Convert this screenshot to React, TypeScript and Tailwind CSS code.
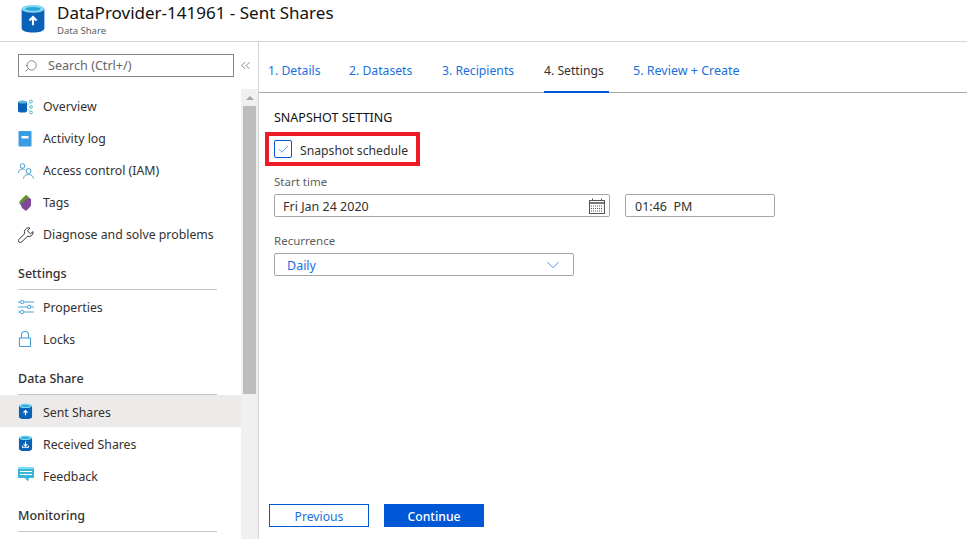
import React from "react";
import { Search, ChevronDown, Check, ChevronsLeft } from "lucide-react";

const font = "font-['Noto_Sans','Open_Sans',sans-serif]";

const Barrel = ({ size = 16, down = false }: { size?: number; down?: boolean }) => (
  <svg width={size} height={(size * 18) / 16} viewBox="0 0 16 18" fill="none">
    <path d="M1 3v12c0 1.4 3.1 2.5 7 2.5s7-1.1 7-2.5V3z" fill="#0a62b8" />
    <ellipse cx="8" cy="3" rx="7" ry="2.4" fill="#7fd8f0" />
    <ellipse cx="8" cy="3" rx="4.6" ry="1.2" fill="#2aa8dc" />
    {down ? (
      <path d="M8 7v4.5M6 9.8l2 2 2-2M4.8 11.5v1.5h6.4v-1.5" stroke="#fff" strokeWidth="1.1" />
    ) : (
      <path d="M8 13V8M5.8 10.2 8 8l2.2 2.2" stroke="#fff" strokeWidth="1.3" />
    )}
  </svg>
);

const OverviewIcon = () => (
  <svg width="16" height="16" viewBox="0 0 16 16" fill="none">
    <path d="M0 3v9c0 1 1.8 1.6 4.5 1.6S9 13 9 12V3z" fill="#0a62b8" />
    <ellipse cx="4.5" cy="3" rx="4.5" ry="1.6" fill="#59b4d9" />
    <circle cx="13" cy="2.5" r="1.4" stroke="#59b4d9" />
    <circle cx="13" cy="8" r="1.4" stroke="#59b4d9" />
    <circle cx="13" cy="13.5" r="1.4" stroke="#59b4d9" />
    <path d="M9.5 6 12 3.5M9.5 10l2.5 2.5" stroke="#59b4d9" strokeWidth="0.8" />
  </svg>
);

const LogIcon = () => (
  <svg width="14" height="16" viewBox="0 0 14 16">
    <rect width="13" height="15.5" x="0.5" rx="1.2" fill="#3b9ce4" />
    <rect width="7" height="2.5" x="3.5" y="5" fill="#fff" />
  </svg>
);

const PeopleIcon = () => (
  <svg width="16" height="16" viewBox="0 0 16 16" fill="none" stroke="#4aa3d8">
    <circle cx="4.5" cy="3" r="2.3" />
    <path d="M.5 10c0-2.4 1.6-4 4-4 .8 0 1.5.2 2 .5" />
    <circle cx="10.5" cy="8" r="2.5" />
    <path d="M5.5 15.5c.2-2.6 2.2-4 5-4s4.8 1.4 5 4" />
  </svg>
);

const TagIcon = () => (
  <svg width="14" height="16" viewBox="0 0 14 16">
    <path d="M8 0 1 7l1 3 8-7z" fill="#76bc2d" />
    <path d="M9 1.5 2 8l2 5 4 3 5-5V4z" fill="#804998" />
    <path d="M8 0 2 6l2 2 7-6z" fill="#5e9624" />
  </svg>
);

const WrenchIcon = () => (
  <svg width="16" height="16" viewBox="0 0 16 16" fill="none" stroke="#333" strokeWidth="1">
    <path d="M10.5.8a4.2 4.2 0 0 0-3.8 5.8L1 12.3a1.9 1.9 0 0 0 2.7 2.7l5.7-5.7A4.2 4.2 0 0 0 15 4.6l-2.6 2.2-3-3L12 1.1a4 4 0 0 0-1.5-.3z" />
  </svg>
);

const SlidersIcon = () => (
  <svg width="16" height="14" viewBox="0 0 16 14" fill="none" stroke="#4aa3d8">
    <path d="M0 2h2.5M6 2h10M0 7h9.5M13 7h3M0 12h2.5M6 12h10" />
    <circle cx="4.2" cy="2" r="1.7" />
    <circle cx="11.2" cy="7" r="1.7" />
    <circle cx="4.2" cy="12" r="1.7" />
  </svg>
);

const LockIcon = () => (
  <svg width="14" height="16" viewBox="0 0 14 16" fill="none" stroke="#4aa3d8" strokeWidth="1.1">
    <rect x="1.5" y="7" width="11" height="8.5" />
    <path d="M3.5 7V4a3.5 3.5 0 0 1 7 0v3" />
  </svg>
);

const FeedbackIcon = () => (
  <svg width="16" height="16" viewBox="0 0 16 16">
    <path d="M0 0h16v11h-5l-1 3.5L7 11H0z" fill="#3bb6d9" />
    <path d="M0 0h16v2H0z" fill="#7fdcf0" />
    <path d="M2 4.5h12M2 7.5h12" stroke="#fff" />
  </svg>
);

const CalendarIcon = () => (
  <svg width="16" height="16" viewBox="0 0 16 16" fill="none" stroke="#555">
    <rect x="0.5" y="2.5" width="15" height="13" />
    <path d="M0.5 5h15" strokeWidth="1.6" />
    <path d="M3.5 0.5v2M12.5 0.5v2" />
    <path d="M2 8h12M2 10.5h12M2 13h12" strokeDasharray="1 1" />
  </svg>
);

function NavRow({
  icon,
  label,
  active,
  textPad = "pt-[2px]",
}: {
  icon: React.ReactNode;
  label: string;
  active?: boolean;
  textPad?: string;
}) {
  return (
    <div className={`flex h-8 items-center pl-[18px] ${active ? "bg-[#edebe9]" : ""}`}>
      <span className="flex w-[25px] shrink-0 items-center">{icon}</span>
      <span className={`text-[12.3px] text-[#323130] ${textPad}`}>{label}</span>
    </div>
  );
}

function NavHeading({ label, className }: { label: string; className: string }) {
  return (
    <div
      className={`ml-[18px] mr-[24px] flex h-[32px] items-end border-b border-[#c8c6c4] pb-[7px] text-[12.5px] font-medium leading-4 text-[#323130] ${className}`}
    >
      {label}
    </div>
  );
}

const tabs = [
  { label: "1. Details", width: "w-[81px] text-[12.2px]" },
  { label: "2. Datasets", width: "w-[93px] text-[12.2px]" },
  { label: "3. Recipients", width: "w-[102px] text-[12.2px]" },
  { label: "4. Settings", width: "w-[65px] mr-[24px] text-[12.2px]" },
  { label: "5. Review + Create", width: "text-[12.5px]" },
];

export default function App() {
  return (
    <div className={`flex h-[539px] w-[967px] flex-col overflow-hidden bg-white ${font}`}>
      <header className="flex h-[42px] shrink-0 items-start border-b border-[#d4d4d4] pl-[20px]">
        <span className="mt-[4px]">
          <Barrel size={26} />
        </span>
        <div className="ml-[11px] mt-[1px]">
          <div className="text-[17px] leading-[24px] text-[#111]">DataProvider-141961 - Sent Shares</div>
          <div className="text-[9.5px] leading-[12px] text-[#605e5c]">Data Share</div>
        </div>
      </header>

      <div className="flex min-h-0 flex-1">
        <aside className="flex w-[259px] shrink-0 flex-col border-r border-[#d4d4d4]">
          <div className="flex h-[47px] shrink-0 items-start pl-[18px] pt-[12px]">
            <div className="flex h-[23px] w-[216px] items-center border border-[#8a8886] pl-[5px]">
              <Search size={14} strokeWidth={1.2} className="-scale-x-100 text-[#605e5c]" />
              <span className="ml-[10px] pt-[2px] text-[12.6px] text-[#666]">Search (Ctrl+/)</span>
            </div>
            <ChevronsLeft size={15} strokeWidth={1} className="ml-[4px] mt-[4px] text-[#444]" />
          </div>
          <div className="flex min-h-0 flex-1">
            <nav className="w-[241px] shrink-0 pt-[2px]">
              <NavRow textPad="pt-0" icon={<OverviewIcon />} label="Overview" />
              <NavRow textPad="pt-0" icon={<LogIcon />} label="Activity log" />
              <NavRow textPad="pt-0" icon={<PeopleIcon />} label="Access control (IAM)" />
              <NavRow textPad="pt-0" icon={<TagIcon />} label="Tags" />
              <NavRow textPad="pt-0" icon={<WrenchIcon />} label="Diagnose and solve problems" />
              <NavHeading label="Settings" className="mb-[1px] mt-[7px]" />
              <NavRow icon={<SlidersIcon />} label="Properties" />
              <NavRow icon={<LockIcon />} label="Locks" />
              <NavHeading label="Data Share" className="mt-[8px]" />
              <NavRow textPad="pt-[4px]" active icon={<Barrel size={15} />} label="Sent Shares" />
              <NavRow textPad="pt-[4px]" icon={<Barrel size={15} down />} label="Received Shares" />
              <NavRow textPad="pt-[4px]" icon={<FeedbackIcon />} label="Feedback" />
              <NavHeading label="Monitoring" className="mt-[9px]" />
            </nav>
            <div className="flex w-[17px] shrink-0 flex-col items-center bg-[#f0f0f0]">
              <div className="flex h-[17px] w-full items-center justify-center">
                <div className="h-0 w-0 border-x-[4px] border-b-[4px] border-x-transparent border-b-[#a6a6a6]" />
              </div>
              <div className="h-[288px] w-[13px] bg-[#bdbdbd]" />
            </div>
          </div>
        </aside>

        <main className="flex min-w-0 flex-1 flex-col">
          <div className="flex h-[51px] shrink-0 items-end border-b border-[#a6a6a6] pl-[9px]">
            {tabs.map((tab, i) => (
              <div
                key={tab.label}
                className={`mb-[-1px] flex h-[36px] items-center whitespace-nowrap border-b-2 pb-[6px] ${
                  i === 3 ? "border-[#0058d6] text-[#323130]" : "border-transparent text-[#1a6fdc]"
                } ${tab.width}`}
              >
                {tab.label}
              </div>
            ))}
          </div>

          <div className="flex min-h-0 flex-1 flex-col pb-[12px] pl-[10px]">
            <div className="pl-[5px] pt-[16px] text-[12.5px] leading-[18px] text-[#111]">SNAPSHOT SETTING</div>
            <div className="-ml-[4px] mt-[5px] flex h-[34px] w-[155px] items-center border-[4px] border-[#ed1c24] pl-[5px]">
              <span className="flex h-[18px] w-[18px] items-center justify-center rounded-[2px] border border-[#0058d6]">
                <Check size={13} strokeWidth={1.2} className="text-[#1a6fdc]" />
              </span>
              <span className="ml-[8px] whitespace-nowrap pt-[4px] text-[12.2px] text-[#323130]">Snapshot schedule</span>
            </div>

            <div className="pl-[5px]">
              <div className="mt-[8px] text-[11.5px] leading-[16px] text-[#605e5c]">Start time</div>
              <div className="mt-[4px] flex gap-[15px]">
                <div className="flex h-[23px] w-[336px] items-center justify-between rounded-[2px] border border-[#a6a6a6] pl-[8px] pr-[4px] text-[12.5px] text-[#323130]">
                  <span className="pt-[4px]">Fri Jan 24 2020</span>
                  <CalendarIcon />
                </div>
                <div className="flex h-[23px] w-[150px] items-center whitespace-pre rounded-[2px] border border-[#a6a6a6] pl-[9px] text-[12.5px] text-[#323130]">
                  <span className="pt-[4px]">01:46  PM</span>
                </div>
              </div>
              <div className="mt-[16px] text-[11.5px] leading-[16px] text-[#605e5c]">Recurrence</div>
              <div className="mt-[4px] flex h-[23px] w-[300px] items-center justify-between rounded-[2px] border border-[#a6a6a6] pl-[12px] pr-[9px] text-[12.5px] text-[#1a6fdc]">
                <span className="pt-[4px]">Daily</span>
                <ChevronDown size={22} strokeWidth={0.8} className="text-[#1a6fdc]" />
              </div>
            </div>

            <div className="mt-auto flex gap-[15px]">
              <button className="h-[23px] w-[100px] border border-[#0058d6] pt-[3px] text-[12.2px] text-[#1a6fdc]">Previous</button>
              <button className="h-[23px] w-[100px] bg-[#0058d6] pt-[3px] text-[12.2px] font-medium text-white">Continue</button>
            </div>
          </div>
        </main>
      </div>
    </div>
  );
}
